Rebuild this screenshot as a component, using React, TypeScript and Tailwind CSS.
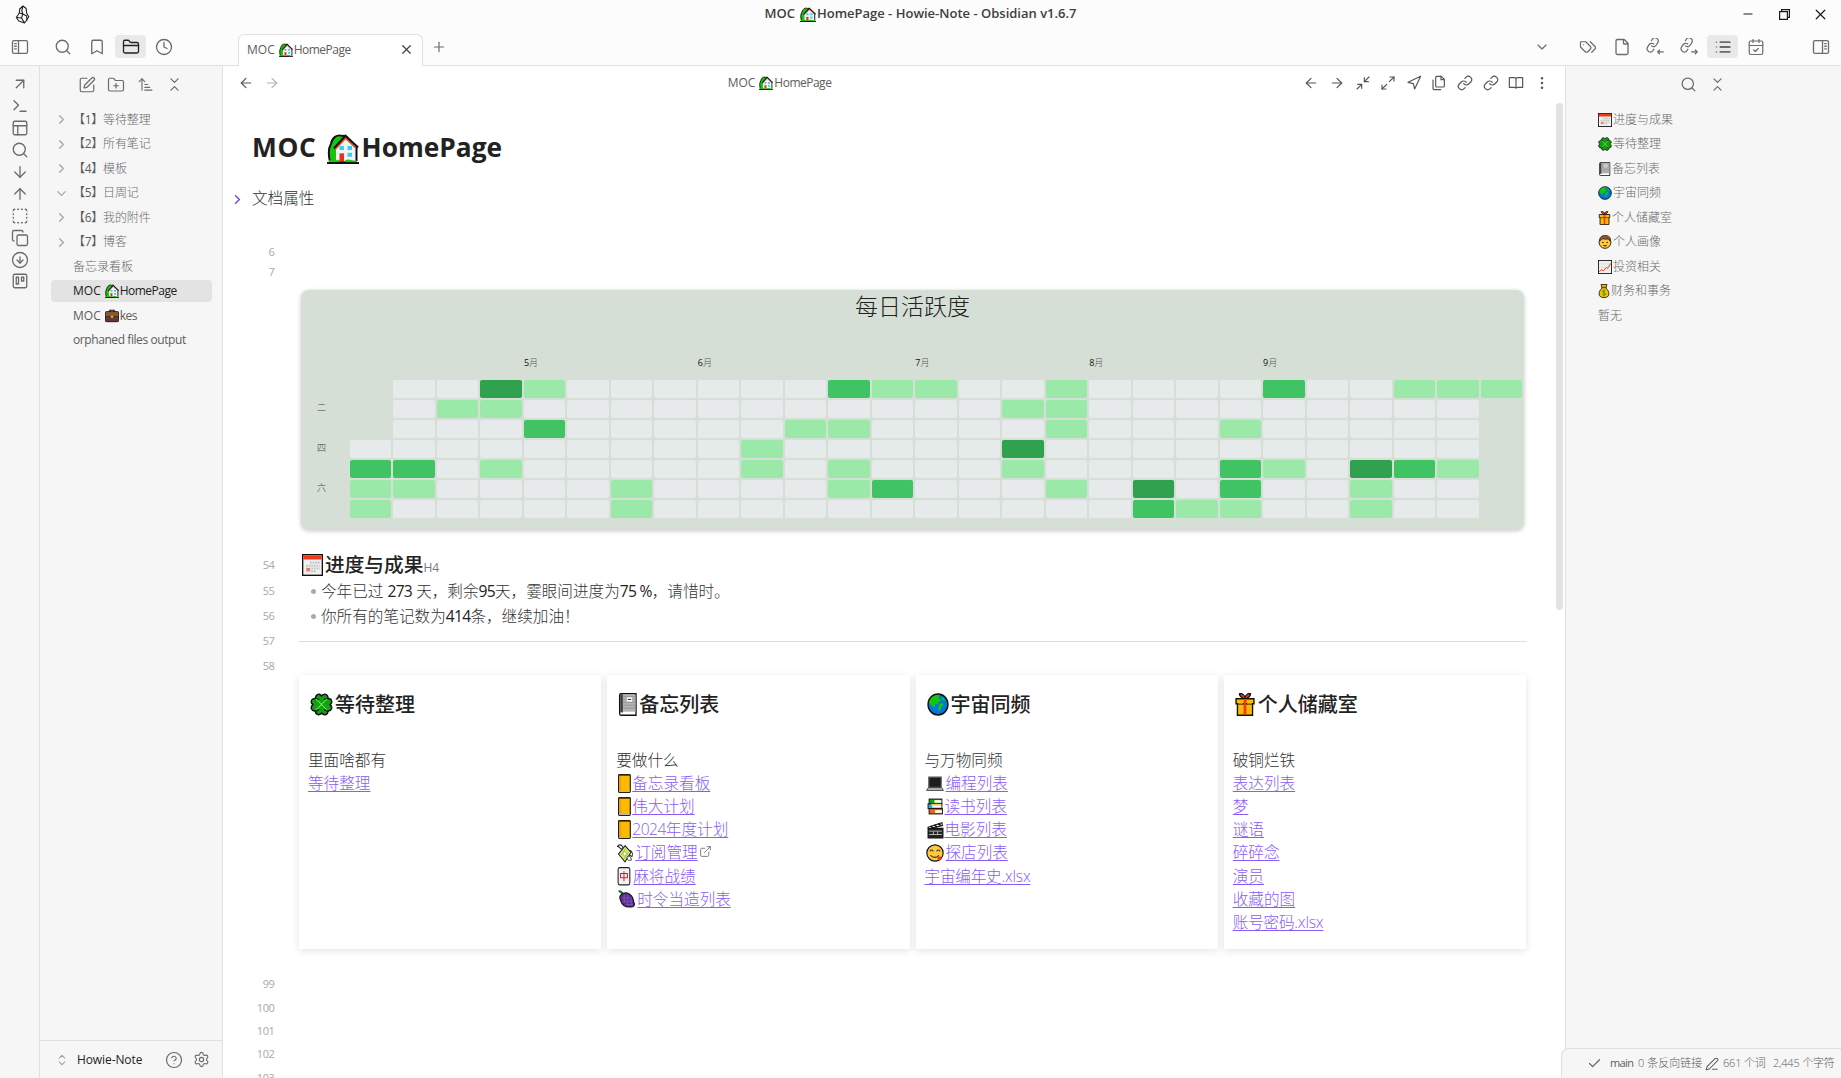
import React from "react";
import {
  ArrowDown, ArrowLeft, ArrowRight, ArrowUp, ArrowUpNarrowWide, ArrowUpRight, Bookmark, CalendarCheck,
  Check, ChevronDown, ChevronRight, ChevronsDownUp, ChevronsUpDown, CircleArrowDown, CircleHelp, Clock, Copy,
  EllipsisVertical, ExternalLink, File, FolderClosed, FolderPlus, Link, Maximize2, Minimize2, Minus, Navigation,
  PanelsTopLeft, PenLine, Plus, Search, Settings, SquareDashed, SquarePen, Terminal, X,
} from "lucide-react";

type IconType = React.ComponentType<{ size?: number; strokeWidth?: number; className?: string }>;

/* ---------- pictographs ---------- */

const art: Record<string, React.ReactNode> = {
  house: (
    <>
      <path d="M3 30c-2-9-2-14 1-19 1-6 6-10 11-8 4-1 6 2 6 5v22z" fill="#16c60c" stroke="#111" strokeWidth="2" />
      <path d="M9 15 19 4l10 11v14H9z" fill="#f3f3f3" />
      <path d="M29.500 13v16" stroke="#111" strokeWidth="2" />
      <path d="M7 16 18.500 3 31 15" fill="none" stroke="#111" strokeWidth="2.400" />
      <path d="M8.500 16.500 18.500 5.500 29 15.500" fill="none" stroke="#f03a17" strokeWidth="1.500" />
      <path d="M12.500 13.500h4.500v4h-4.500zM20.500 13.500h4.500v4h-4.500zM20.500 20.500h4.500v4h-4.500z" fill="#31d2f7" />
      <path d="M12.500 21h4.500v8h-4.500z" fill="#e8301c" />
      <path d="M2 28.500c4-3 6 1 9-1h1v2h6v-1c4-3 8 1 12 0v2H2z" fill="#16c60c" />
      <path d="M0 31h32" stroke="#111" strokeWidth="2" />
    </>
  ),
  briefcase: (
    <>
      <path d="M11 7V3h10v4" fill="none" stroke="#111" strokeWidth="2.500" />
      <rect x="1" y="6" width="30" height="23" rx="2" fill="#603d30" stroke="#111" strokeWidth="2" />
      <path d="M2 7h28v9H2z" fill="#8e562e" />
      <path d="M2 17h28" stroke="#402a20" strokeWidth="1.500" />
      <rect x="13.500" y="15" width="5" height="5" fill="#f7b40a" />
    </>
  ),
  calendar: (
    <>
      <rect x="1" y="1" width="30" height="30" fill="#f2f2f2" stroke="#111" strokeWidth="2" />
      <path d="M2 2h28v6H2z" fill="#f03a17" />
      <path d="M12 12.500h15M6 17h21M6 21h21M6 25h15" stroke="#c6c6c6" strokeWidth="3" strokeDasharray="3 1" />
      <path d="M7 20.500h5v4H7z" fill="#f4694e" />
    </>
  ),
  clover: (
    <>
      <g fill="#13a10e" stroke="#111" strokeWidth="2">
        <path d="M16 16C6 14 6 3 11 2c3-1 4 1 5 2 1-1 3-3 6-2 5 2 4 12-6 14z" />
        <path d="M16 16C6 18 6 29 11 30c3 1 4-1 5-2 1 1 3 3 6 2 5-2 4-12-6-14z" />
        <path d="M16 16C14 6 3 6 2 11c-1 3 1 4 2 5-1 1-3 3-2 6 2 5 12 4 14-6z" />
        <path d="M16 16C18 6 29 6 30 11c1 3-1 4-2 5 1 1 3 3 2 6-2 5-12 4-14-6z" />
      </g>
      <circle cx="16" cy="16" r="8" fill="#13a10e" />
      <path d="m8 8 16 16M24 8 8 24" stroke="#7be876" strokeWidth="1.400" />
    </>
  ),
  notebook: (
    <>
      <path d="M4 3c0-1 1-2 2-2h23v30H6c-1 0-2-1-2-2z" fill="#fff" stroke="#111" strokeWidth="2" />
      <path d="M5 2h4v25H5z" fill="#3b3b3b" />
      <path d="M9 2h19v24H9z" fill="#b4b4b4" />
      <path d="M10 5h18M10 9h18M10 13h18M10 17h18M10 21h18" stroke="#7f7f7f" strokeDasharray="1.500 1.500" strokeWidth="1.500" />
      <rect x="15" y="6" width="8" height="6" fill="#fff" />
      <path d="M16.500 9h5" stroke="#333" strokeWidth="1.500" />
    </>
  ),
  globe: (
    <>
      <circle cx="16" cy="16" r="14.500" fill="#0078d7" stroke="#111" strokeWidth="2" />
      <path d="M3 13C5 5 12 2 18 3l-1 4 4 3-4 2-1 4-4-1-1 5-5-3zM17 17l5-4 2 4-3 2-2 6-3-2z" fill="#16c60c" />
      <path d="m22 5 5 5-2 1-4-3z" fill="#16c60c" />
    </>
  ),
  gift: (
    <>
      <path d="M16 9C12 6 8 6 8 1c4-1 7 2 8 5 1-3 4-6 8-5 0 5-4 5-8 8z" fill="#f03a17" stroke="#111" strokeWidth="1.800" />
      <path d="M5 15h22v16H5z" fill="#ffb900" stroke="#111" strokeWidth="2" />
      <path d="M3 8h26v7H3z" fill="#ffb900" stroke="#111" strokeWidth="2" />
      <path d="M16 9v21" stroke="#f03a17" strokeWidth="4" />
      <path d="M6 15h7m6 0h7" stroke="#c58100" strokeWidth="2" />
    </>
  ),
  man: (
    <>
      <circle cx="16" cy="17" r="13.500" fill="#ffc83d" stroke="#111" strokeWidth="2" />
      <path d="M4 14C3 4 9 1 17 1s13 5 11 13l-5-5c-5 2-11-1-14 0z" fill="#8e562e" stroke="#111" strokeWidth="1.500" />
      <circle cx="11" cy="17" r="1.800" fill="#222" />
      <circle cx="21" cy="17" r="1.800" fill="#222" />
      <path d="M11 23h10c-1 4-9 4-10 0z" fill="#8b2a14" />
    </>
  ),
  chart: (
    <>
      <rect x="1" y="1" width="30" height="30" fill="#f2f2f2" stroke="#111" strokeWidth="2" />
      <path d="M9 2v28M16 2v28M23 2v28M2 9h28M2 16h28M2 23h28" stroke="#d0d0d0" />
      <path d="m3 27 5-5 4 3 7-8 3 2 8-12" fill="none" stroke="#f03a17" strokeWidth="2.200" />
    </>
  ),
  moneybag: (
    <>
      <path d="M8 1h16l-3 8c6 5 8 9 8 14 0 6-6 8-13 8S3 29 3 23c0-5 2-9 8-14z" fill="#ffb900" stroke="#111" strokeWidth="2" />
      <path d="M9 8h14" stroke="#7a4a12" strokeWidth="3" />
      <path d="M20 16c-2-2-8-2-8 1 0 4 8 2 8 6 0 3-6 3-8 1M16 13v15" fill="none" stroke="#13a10e" strokeWidth="2" />
    </>
  ),
  ledger: (
    <>
      <rect x="3" y="1" width="22" height="30" rx="1.500" fill="#ffb900" stroke="#111" strokeWidth="2" />
      <path d="M4 2h20" stroke="#5d4200" strokeWidth="2" />
      <path d="M7 4v24" stroke="#e6a000" strokeWidth="1.500" />
      <path d="M4 29.500h20" stroke="#b8b8b8" strokeWidth="2" />
    </>
  ),
  wings: (
    <>
      <path d="M12 5C8 0 3 1 1 4c4 0 4 4 9 5zM24 11c6-1 8 5 6 10-3-1-5-1-7-5z" fill="#fff" stroke="#222" strokeWidth="1.800" />
      <path d="M16 3 28 14 16 30 3 17z" fill="#d4ea7a" stroke="#222" strokeWidth="2" />
      <path d="m8 19 9-11M14 25l9-11" stroke="#8fae2a" strokeWidth="1.500" />
      <circle cx="15.500" cy="16.500" r="3.500" fill="#fbffe6" stroke="#7f9c1e" />
      <path d="M20 22c3-3 8-1 9 5-3 0-5 2-8-1z" fill="#fff" stroke="#222" strokeWidth="1.500" />
    </>
  ),
  mahjong: (
    <>
      <rect x="4" y="1" width="22" height="29" rx="3" fill="#f2f2f2" stroke="#222" strokeWidth="2" />
      <path d="M8.500 11h13v7h-13zM15 7v17" fill="none" stroke="#e81224" strokeWidth="1.800" />
    </>
  ),
  grapes: (
    <>
      <path d="M3 3c3-2 6 2 8 5" fill="none" stroke="#0b7a0b" strokeWidth="4" />
      <path d="M6 10c5-7 13-6 17-2 5 3 6 8 7 14 3 6-2 9-6 8-9 1-15-4-17-10-2-4-3-7-1-10z" fill="#5c2e91" stroke="#1b0d2c" strokeWidth="2" />
      <path d="M9 14h14M10 20h17M15 26h13M13 8v15M19 8v20M25 13v15" stroke="#8a5cc0" strokeWidth="1.200" />
    </>
  ),
  laptop: (
    <>
      <path d="M5 4h22v19H5z" fill="#1e1e1e" stroke="#555" strokeWidth="2" />
      <path d="M4 24h24l3 5H1z" fill="#c4c4c4" stroke="#333" strokeWidth="1.600" />
    </>
  ),
  books: (
    <>
      <rect x="4" y="2" width="24" height="9" fill="#16a510" stroke="#111" strokeWidth="1.800" />
      <path d="M14 4h13v5H14z" fill="#fff" />
      <rect x="2" y="11" width="26" height="9" fill="#31a8f0" stroke="#111" strokeWidth="1.800" />
      <path d="M8 11h19v3H8z" fill="#f7c95a" />
      <path d="M10 14h17v4H10z" fill="#fff" />
      <rect x="4" y="20" width="25" height="10" fill="#f7630c" stroke="#111" strokeWidth="1.800" />
      <path d="M15 23h13v5H15z" fill="#fff" />
    </>
  ),
  clapper: (
    <>
      <path d="M2 13h28v17H2z" fill="#222" stroke="#111" strokeWidth="2" />
      <path d="m2 11 26-8 1 5-26 6z" fill="#fff" stroke="#111" strokeWidth="2" />
      <path d="m7 9 5 4M14 7l5 4M21 5l5 3" stroke="#111" strokeWidth="3" />
      <path d="M4 18h24M4 24h24M12 19v5M20 19v5" stroke="#c8c8c8" strokeWidth="1.600" />
    </>
  ),
  yum: (
    <>
      <circle cx="16" cy="16" r="14.500" fill="#ffc83d" stroke="#111" strokeWidth="2" />
      <path d="M7 13c1-3 5-3 6 0M19 13c1-3 5-3 6 0M8 20c4 5 11 5 15 0" fill="none" stroke="#2b2b2b" strokeWidth="2" />
      <path d="M20 25c0-4 8-4 8 0 0 5-6 6-8 0z" fill="#f03a17" />
    </>
  ),
};

function Emoji({ name, className }: { name: string; className: string }) {
  return (
    <svg viewBox="0 0 32 32" preserveAspectRatio="none" className={`inline-block shrink-0 ${className}`}>
      {art[name]}
    </svg>
  );
}

/* ---------- custom interface icons ---------- */

function Stroke({ size = 18, sw = 1.75, children }: { size?: number; sw?: number; children: React.ReactNode }) {
  return (
    <svg width={size} height={size} viewBox="0 0 24 24" fill="none" stroke="currentColor" strokeWidth={sw} strokeLinecap="round" strokeLinejoin="round">
      {children}
    </svg>
  );
}

const SidebarLeft = () => (
  <Stroke size={18}>
    <rect x="2" y="3.500" width="20" height="17" rx="2" />
    <path d="M10 3.500v17M5 7.500h2M5 11h2M5 14.500h2" />
  </Stroke>
);
const SidebarRight = () => (
  <Stroke size={18}>
    <rect x="2" y="3.500" width="20" height="17" rx="2" />
    <path d="M14 3.500v17M17 7.500h2M17 11h2M17 14.500h2" />
  </Stroke>
);
const TagPair = () => (
  <Stroke size={18} sw={1.6}>
    <path d="M9 5H2v7l6.290 6.290c.94.94 2.480.94 3.420 0l3.580-3.580c.94-.94.94-2.480 0-3.420L9 5Z" />
    <path d="M6 9.010V9M15 5l6.300 6.300a2.400 2.400 0 0 1 0 3.400L17 19" />
  </Stroke>
);
const Pages = () => (
  <Stroke size={16}>
    <path d="M15.500 2H8.600C7.700 2 7 2.700 7 3.600v12.800c0 .9.700 1.600 1.600 1.600h9.800c.9 0 1.600-.7 1.600-1.600V6.500z" />
    <path d="M3 7.600v12.800c0 .9.700 1.600 1.600 1.600h9.800M15 2v5h5" />
  </Stroke>
);
const Book = () => (
  <Stroke size={16}>
    <path d="M2 4h7.500C11 4 12 5 12 6v14c0-1-1-1.500-2.500-1.500H2zM22 4h-7.500C13 4 12 5 12 6v14c0-1 1-1.500 2.500-1.500H22z" />
  </Stroke>
);
const chain = (
  <g transform="translate(-1.500 -1) rotate(-14 10 10) scale(.86)" strokeWidth="1.900">
    <path d="M10 13a5 5 0 0 0 7.540.54l3-3a5 5 0 0 0-7.070-7.070l-1.720 1.710" />
    <path d="M14 11a5 5 0 0 0-7.540-.54l-3 3a5 5 0 0 0 7.070 7.070l1.710-1.710" />
  </g>
);
const LinksIn = () => (
  <Stroke size={18} sw={1.6}>
    {chain}
    <path d="M23 18.500h-7.500M18 16l-2.500 2.500L18 21" />
  </Stroke>
);
const LinksOut = () => (
  <Stroke size={18} sw={1.6}>
    {chain}
    <path d="M15.500 18.500H23M20.500 16l2.500 2.500-2.500 2.500" />
  </Stroke>
);
const OutlineList = () => (
  <Stroke size={18} sw={2.4}>
    <path d="M8.500 5.500H21M8.500 12H21M8.500 18.500H21" />
    <path d="M3 5.500h.5M3 12h.5M3 18.500h.5" strokeWidth="1.500" />
  </Stroke>
);
const Board = () => (
  <Stroke>
    <rect x="3" y="3" width="18" height="18" rx="2" />
    <path d="M7 7h3v9H7zM14 7h3v5h-3z" />
  </Stroke>
);
const Logo = () => (
  <svg width="15" height="19" viewBox="0 0 15 19" fill="none" stroke="#1f1f1f" strokeWidth="1.100" strokeLinejoin="round">
    <path d="M8 1 4.700 4 4.300 8 1.300 12.500 3.800 16l5.700 1.900 1.500-1.900 2.800-4.200L11.700 8.500 11.200 3.500z" />
    <path d="M8 1 6.800 5.500 7.800 9l3.900 2 .3 4.500M4.300 8l3.500 1-1.300 4-5.200-.5M6.500 13l3 4.900" />
  </svg>
);

/* ---------- building blocks ---------- */

const rowGlyphs = "flex items-center whitespace-nowrap";

function Slot({ children, className }: { children: React.ReactNode; className: string }) {
  return <div className={`flex shrink-0 items-center justify-center ${className}`}>{children}</div>;
}

function HomeLabel() {
  return (
    <>
      <span>MOC</span>
      <Emoji name="house" className="mr-px ml-[4px] h-[14px] w-[14px]" />
      <span className="tracking-[-.5px]">HomePage</span>
    </>
  );
}

function Titlebar() {
  return (
    <div className="flex h-[28px] shrink-0 items-center">
      <div className="flex w-[300px] items-center pl-[15px]">
        <Logo />
      </div>
      <div className={`${rowGlyphs} flex-1 justify-center text-[13px] font-semibold text-[#3f3f3f]`}>
        <span>MOC</span>
        <Emoji name="house" className="mr-px ml-[5px] h-[15px] w-[16px]" />
        <span>HomePage - Howie-Note - Obsidian v1.6.7</span>
      </div>
      <div className="flex w-[300px] items-center justify-end pr-[3px] text-[#1a1a1a]">
        <Slot className="w-[36px]"><Minus size={14} strokeWidth={1.8} /></Slot>
        <Slot className="w-[36px]">
          <svg width="11" height="11" viewBox="0 0 11 11" fill="none" stroke="currentColor" strokeWidth="1.200">
            <path d="M.6 2.600h7.800v7.800H.6zM2.600 2.600v-2h7.800v7.800h-2" />
          </svg>
        </Slot>
        <Slot className="w-[36px]"><X size={17} strokeWidth={1.7} /></Slot>
      </div>
    </div>
  );
}

function TabRow() {
  return (
    <div className="flex h-[38px] shrink-0 border-b border-[#e0e0e0] text-[#6b6b6b]">
      <div className="flex w-[238px] shrink-0 items-center">
        <Slot className="mr-[6px] w-10"><SidebarLeft /></Slot>
        <Slot className="w-[34px]"><Search size={18} strokeWidth={1.75} /></Slot>
        <Slot className="w-[34px]"><Bookmark size={18} strokeWidth={1.75} /></Slot>
        <Slot className="w-[33px]">
          <div className="flex h-[23px] w-[31px] items-center justify-center rounded bg-[#e9e9e9] text-[#222]">
            <FolderClosed size={18} strokeWidth={1.75} />
          </div>
        </Slot>
        <Slot className="w-[34px]"><Clock size={18} strokeWidth={1.75} /></Slot>
      </div>
      <div className="mt-[6px] -mb-px flex w-[185px] shrink-0 items-center rounded-t-md border border-b-0 border-[#e0e0e0] bg-white pb-[2px] pl-[8px]">
        <div className={`${rowGlyphs} w-[152px] text-[12px] text-[#5c5c5c]`}>
          <HomeLabel />
        </div>
        <X size={15} strokeWidth={1.9} className="text-[#444]" />
      </div>
      <Slot className="w-[31px]"><Plus size={16} strokeWidth={1.75} /></Slot>
      <div className="flex flex-1 items-center justify-end">
        <Slot className="mr-[13px] w-8"><ChevronDown size={16} strokeWidth={1.75} /></Slot>
        <Slot className="w-[34px]"><TagPair /></Slot>
        <Slot className="w-[33px]"><File size={18} strokeWidth={1.75} /></Slot>
        <Slot className="w-[34px]"><LinksIn /></Slot>
        <Slot className="w-[34px]"><LinksOut /></Slot>
        <Slot className="w-[33px]">
          <div className="flex h-[23px] w-[31px] items-center justify-center rounded bg-[#e9e9e9]">
            <OutlineList />
          </div>
        </Slot>
        <Slot className="w-[34px]"><CalendarCheck size={18} strokeWidth={1.6} /></Slot>
        <Slot className="ml-[28px] w-10"><SidebarRight /></Slot>
      </div>
    </div>
  );
}

const ribbon: IconType[] = [ArrowUpRight, Terminal, PanelsTopLeft, Search, ArrowDown, ArrowUp, SquareDashed, Copy, CircleArrowDown, Board];

function Ribbon() {
  return (
    <div className="flex w-10 shrink-0 flex-col items-center border-r border-[#e0e0e0] pt-[7.500px] text-[#6b6b6b]">
      {ribbon.map((Icon, i) => (
        <Slot key={i} className="h-[21.900px] w-[39px]"><Icon size={18} strokeWidth={1.75} /></Slot>
      ))}
    </div>
  );
}

const folders = [
  { no: "1", name: "等待整理" },
  { no: "2", name: "所有笔记" },
  { no: "4", name: "模板" },
  { no: "5", name: "日周记", open: true },
  { no: "6", name: "我的附件" },
  { no: "7", name: "博客" },
];

function FileTree() {
  return (
    <div className="flex w-[183px] shrink-0 flex-col border-r border-[#e0e0e0]">
      <div className="flex h-[41.700px] items-center pb-[4px] pl-[32px] text-[#6b6b6b]">
        <Slot className="w-[29.300px]"><SquarePen size={18} strokeWidth={1.6} /></Slot>
        <Slot className="w-[29.300px]"><FolderPlus size={18} strokeWidth={1.6} /></Slot>
        <Slot className="w-[29.300px]"><ArrowUpNarrowWide size={17} strokeWidth={1.6} /></Slot>
        <Slot className="w-[29.300px]"><ChevronsDownUp size={17} strokeWidth={1.75} /></Slot>
      </div>
      <div className="flex-1 text-[12px] text-[#5c5c5c]">
        {folders.map((f) => (
          <div key={f.no} className="flex h-[24.500px] items-center">
            <div className="flex w-[29px] justify-end pl-[14px] text-[#a5a5a5]">
              {f.open ? <ChevronDown size={15} strokeWidth={2} /> : <ChevronRight size={15} strokeWidth={2} />}
            </div>
            <span className="ml-[4px] inline-flex w-[30px] justify-center whitespace-nowrap tracking-[-.3px]">【{f.no}】</span>
            <span className="whitespace-nowrap font-light tracking-[-.1px] text-[#6a6a6a]">{f.name}</span>
          </div>
        ))}
        <div className="flex h-[24.500px] items-center pl-[33px] font-light text-[#6a6a6a]">备忘录看板</div>
        <div className="flex h-[24.500px] items-center pl-[11px]">
          <div className={`${rowGlyphs} h-[22px] w-[161px] rounded bg-[#e3e3e3] pl-[22px] text-[#222]`}>
            <HomeLabel />
          </div>
        </div>
        <div className={`${rowGlyphs} h-[24.500px] pl-[33px]`}>
          <span>MOC</span>
          <Emoji name="briefcase" className="mr-px ml-[4px] h-[14px] w-[14px]" />
          <span className="tracking-[-.5px]">kes</span>
        </div>
        <div className={`${rowGlyphs} h-[24.500px] pl-[33px] tracking-[-.42px]`}>orphaned files output</div>
      </div>
      <div className="flex h-[38px] items-center border-t border-[#e0e0e0] text-[#6b6b6b]">
        <ChevronsUpDown size={14} strokeWidth={1.75} className="ml-[15px] text-[#9a9a9a]" />
        <span className="ml-[8px] w-[82px] text-[12px] font-medium tracking-[-.1px] whitespace-nowrap text-[#222]">Howie-Note</span>
        <Slot className="w-[28px] pl-px"><CircleHelp size={18} strokeWidth={1.6} /></Slot>
        <Slot className="w-[28px]"><Settings size={17} strokeWidth={1.6} /></Slot>
      </div>
    </div>
  );
}

const viewActions: IconType[] = [ArrowLeft, ArrowRight, Minimize2, Maximize2, Navigation, Pages, Link, Link, Book, EllipsisVertical];

function ViewHeader() {
  return (
    <div className="flex h-[35px] shrink-0 items-center pb-px text-[#555]">
      <div className="flex w-[267px] items-center pl-[10px]">
        <Slot className="w-[26px]"><ArrowLeft size={16} strokeWidth={1.75} /></Slot>
        <Slot className="w-[26px] text-[#b4b4b4]"><ArrowRight size={16} strokeWidth={1.75} /></Slot>
      </div>
      <div className={`${rowGlyphs} flex-1 justify-center pr-[229px] pb-px text-[12px] text-[#5c5c5c]`}>
        <HomeLabel />
      </div>
      <div className="flex w-[267px] items-center justify-end pr-[10.500px]">
        {viewActions.map((Icon, i) => (
          <Slot key={i} className="w-[25.600px]"><Icon size={16} strokeWidth={1.75} /></Slot>
        ))}
      </div>
    </div>
  );
}

const COLS = 27;
const heat: Record<number, number>[] = [
  { 3: 3, 4: 1, 11: 2, 12: 1, 13: 1, 16: 1, 21: 2, 24: 1, 25: 1, 26: 1 },
  { 2: 1, 3: 1, 15: 1, 16: 1 },
  { 4: 2, 10: 1, 11: 1, 16: 1, 20: 1 },
  { 9: 1, 15: 3 },
  { 0: 2, 1: 2, 3: 1, 9: 1, 11: 1, 15: 1, 20: 2, 21: 1, 23: 3, 24: 2, 25: 1 },
  { 0: 1, 1: 1, 6: 1, 11: 1, 12: 2, 16: 1, 18: 3, 20: 2, 23: 1 },
  { 0: 1, 6: 1, 18: 2, 19: 1, 20: 1, 23: 1 },
];
const levels = ["bg-[#e6eaea]", "bg-[#9be9a8]", "bg-[#40c463]", "bg-[#30a14e]"];
const weekdays = ["", "二", "", "四", "", "六", ""];
const months: Record<number, string> = { 4: "5", 8: "6", 13: "7", 17: "8", 21: "9" };

function hidden(row: number, col: number) {
  return (row < 3 && col === 0) || (row > 0 && col === COLS - 1);
}

function Heatmap() {
  return (
    <div className="ml-[78px] h-[240px] w-[1223px] rounded-lg bg-[#d5dfd5] pr-[2px] shadow-[0_1px_4px_rgba(0,0,0,0.22)]">
      <div className="flex h-[34px] items-center justify-center pb-px pl-[2px] text-[23px] font-light text-[#222]">每日活跃度</div>
      <div className="mt-[31px] ml-[49px] grid h-[16px] grid-cols-[repeat(27,minmax(0,1fr))] gap-x-[2px] text-[9px] leading-4 whitespace-nowrap">
        {Array.from({ length: COLS }, (_, c) => (
          <div key={c} className="text-[#111]">
            {months[c] && <>{months[c]}<span className="font-light text-[#555]">月</span></>}
          </div>
        ))}
      </div>
      <div className="mt-[9px] flex flex-col gap-[2px]">
        {heat.map((row, r) => (
          <div key={r} className="flex h-[18px] items-center">
            <div className="w-[49px] pb-[2px] pl-[16px] text-[9px] font-light text-[#444]">{weekdays[r]}</div>
            <div className="grid h-[18px] flex-1 grid-cols-[repeat(27,minmax(0,1fr))] gap-x-[2px]">
              {Array.from({ length: COLS }, (_, c) => (
                <div key={c} className={hidden(r, c) ? "" : `rounded-[2px] ${levels[row[c] ?? 0]}`} />
              ))}
            </div>
          </div>
        ))}
      </div>
    </div>
  );
}

function LineNo({ n, className = "" }: { n: number; className?: string }) {
  return <div className={`w-[51.500px] shrink-0 text-right text-[11px] tracking-[-.4px] text-[#a8a8a8] ${className}`}>{n}</div>;
}

function Num({ children }: { children: React.ReactNode }) {
  return <span className="font-normal tracking-[-.7px] text-[#222]">{children}</span>;
}

type Item = { text: string; digits?: string; icon?: string; iconClass?: string; ext?: boolean };
type CardData = { icon: string; iconClass: string; title: string; lead: string; items: Item[] };

const cards: CardData[] = [
  { icon: "clover", iconClass: "ml-[2px] h-[23px] w-[23px] mr-[2px]", title: "等待整理", lead: "里面啥都有", items: [{ text: "等待整理" }] },
  {
    icon: "notebook", iconClass: "ml-px h-[23px] w-[21px] mr-px", title: "备忘列表", lead: "要做什么",
    items: [
      { text: "备忘录看板", icon: "ledger", iconClass: "w-[17px] h-[19px] ml-px -mr-[2px]" },
      { text: "伟大计划", icon: "ledger", iconClass: "w-[17px] h-[19px] ml-px -mr-[2px]" },
      { digits: "2024", text: "年度计划", icon: "ledger", iconClass: "w-[17px] h-[19px] ml-px -mr-[2px]" },
      { text: "订阅管理", icon: "wings", iconClass: "w-[16px] h-[19px] ml-px mr-[2px]", ext: true },
      { text: "麻将战绩", icon: "mahjong", iconClass: "w-[17px] h-[19px] mr-0" },
      { text: "时令当造列表", icon: "grapes", iconClass: "w-[18px] h-[18px] ml-px mr-[2px]" },
    ],
  },
  {
    icon: "globe", iconClass: "h-[23px] w-[22px] ml-[2px] mr-[2px]", title: "宇宙同频", lead: "与万物同频",
    items: [
      { text: "编程列表", icon: "laptop", iconClass: "w-[18px] h-[17px] ml-px mr-[2px]" },
      { text: "读书列表", icon: "books", iconClass: "w-[17px] h-[17px] ml-[2px] mr-px" },
      { text: "电影列表", icon: "clapper", iconClass: "w-[17px] h-[18px] ml-[2px] mr-px" },
      { text: "探店列表", icon: "yum", iconClass: "w-[18px] h-[18px] ml-px mr-[2px]" },
      { text: "宇宙编年史.xlsx" },
    ],
  },
  {
    icon: "gift", iconClass: "ml-px h-[23px] w-[22px] mr-[2px]", title: "个人储藏室", lead: "破铜烂铁",
    items: ["表达列表", "梦", "谜语", "碎碎念", "演员", "收藏的图", "账号密码.xlsx"].map((text) => ({ text })),
  },
];

function Card({ card }: { card: CardData }) {
  return (
    <div className="h-[274px] bg-white pl-[9px] shadow-[0_2px_8px_rgba(0,0,0,0.11)]">
      <div className={`${rowGlyphs} mt-[14px] h-[31px] text-[20px] font-medium text-[#222]`}>
        <Emoji name={card.icon} className={card.iconClass} />
        <span>{card.title}</span>
      </div>
      <div className="mt-[29px] text-[15.600px] font-light">
        <div className="flex h-[23.150px] items-center text-[#333]">{card.lead}</div>
        {card.items.map((it) => (
          <div key={it.text} className={`${rowGlyphs} h-[23.150px] text-[#8a5cf5]`}>
            {it.icon && <Emoji name={it.icon} className={it.iconClass ?? ""} />}
            <span className={`underline decoration-1 underline-offset-2 ${it.text.endsWith(".xlsx") ? "tracking-[-.2px]" : ""}`}>
              {it.digits && <span className="tracking-[-.5px]">{it.digits}</span>}
              {it.text}
            </span>
            {it.ext && <ExternalLink size={13} strokeWidth={1.7} className="-mt-1 ml-[1px] text-[#777]" />}
          </div>
        ))}
      </div>
    </div>
  );
}

function Note() {
  return (
    <div className="flex min-w-0 flex-1 flex-col bg-white">
      <ViewHeader />
      <div className="flex min-h-0 flex-1">
        <div className="min-w-0 flex-1 overflow-hidden">
          <div className={`${rowGlyphs} mt-[27px] h-[40px] pl-[29px] text-[26.300px] font-bold text-[#222]`}>
            <span className="tracking-[.7px]">MOC</span>
            <Emoji name="house" className="mr-[3px] ml-[10px] h-[31px] w-[32px]" />
            <span>HomePage</span>
          </div>
          <div className="mt-[17px] flex h-[28px] items-center text-[15.600px] font-light text-[#333]">
            <ChevronRight size={15} strokeWidth={2.6} className="ml-[7px] text-[#7c4df0]" />
            <span className="ml-[7px]">文档属性</span>
          </div>
          <div className="mt-[29px] h-[48px]">
            <LineNo n={6} className="leading-5" />
            <LineNo n={7} className="leading-5" />
          </div>
          <Heatmap />
          <div className="mt-[21px] flex h-[28px] items-center">
            <LineNo n={54} />
            <div className={`${rowGlyphs} ml-[26.500px] text-[19.700px] font-medium text-[#222]`}>
              <Emoji name="calendar" className="ml-px mr-[2px] h-[22px] w-[21px]" />
              <span>进度与成果</span>
              <span className="mt-[5px] text-[12px] font-normal text-[#777]">H4</span>
            </div>
          </div>
          <div className="flex h-[25px] items-center">
            <LineNo n={55} />
            <div className={`${rowGlyphs} ml-[36.500px] text-[15.600px] font-light text-[#333]`}>
              <span className="mr-[5px] size-[5px] rounded-full bg-[#ababab]" />
              <span>今年已过 <Num>273</Num> 天，剩余<Num>95</Num>天，霎眼间进度为<Num>75 %</Num>，请惜时。</span>
            </div>
          </div>
          <div className="flex h-[25px] items-center">
            <LineNo n={56} />
            <div className={`${rowGlyphs} ml-[36.500px] text-[15.600px] font-light text-[#333]`}>
              <span className="mr-[5px] size-[5px] rounded-full bg-[#ababab]" />
              <span>你所有的笔记数为<Num>414</Num>条，继续加油！</span>
            </div>
          </div>
          <div className="flex h-[24px] items-center">
            <LineNo n={57} />
            <div className="ml-[24.500px] h-px w-[1228px] bg-[#dedede]" />
          </div>
          <div className="flex h-[22px] items-end pb-px"><LineNo n={58} /></div>
          <div className="ml-[76px] grid w-[1227px] grid-cols-4 gap-x-[6px]">
            {cards.map((c) => <Card key={c.title} card={c} />)}
          </div>
          <div className="mt-[24px]">
            {[99, 100, 101, 102, 103].map((n) => (
              <div key={n} className="flex h-[23.300px] items-center"><LineNo n={n} /></div>
            ))}
          </div>
        </div>
        <div className="w-[9px] shrink-0 pt-[2px]"><div className="h-[507px] w-[7px] rounded-full bg-[#e3e3e3]" /></div>
      </div>
    </div>
  );
}

const outline = [
  ["calendar", "进度与成果"], ["clover", "等待整理"], ["notebook", "备忘列表"], ["globe", "宇宙同频"], ["gift", "个人储藏室"],
  ["man", "个人画像"], ["chart", "投资相关"], ["moneybag", "财务和事务"], ["", "暂无"],
];
const outlineIcon: Record<string, string> = {
  notebook: "w-[13px] mr-px", gift: "w-[13px] mr-px", moneybag: "w-[12px] mr-px",
};

function OutlinePane() {
  return (
    <div className="flex w-[276px] shrink-0 flex-col border-l border-[#e0e0e0]">
      <div className="flex h-[41.700px] items-center pb-[4px] pl-[108px] text-[#6b6b6b]">
        <Slot className="w-[29px]"><Search size={17} strokeWidth={1.75} /></Slot>
        <Slot className="w-[29px]"><ChevronsDownUp size={17} strokeWidth={1.75} /></Slot>
      </div>
      <div className="flex-1 pl-[32px] text-[12px] font-light text-[#6a6a6a]">
        {outline.map(([icon, text]) => (
          <div key={text} className={`${rowGlyphs} h-[24.500px]`}>
            {icon && <Emoji name={icon} className={`h-[14px] ${outlineIcon[icon] ?? "w-[14px] mr-px"}`} />}
            <span>{text}</span>
          </div>
        ))}
      </div>
      <div className="-ml-[5px] flex h-[30px] shrink-0 items-center rounded-tl-lg border-t border-l border-[#dedede] bg-[#f6f6f6] text-[11px] whitespace-nowrap text-[#5c5c5c]">
        <Check size={15} strokeWidth={1.75} className="mr-[8px] ml-[25px]" />
        <span className="w-[28px] tracking-[-.6px]">main</span>
        <span className="w-[67px] font-light">0 条反向链接</span>
        <PenLine size={14} strokeWidth={1.75} />
        <span className="ml-[4px] w-[50px] font-light tracking-[-.2px]">661 个词</span>
        <span className="font-light tracking-[-.2px]">2,445 个字符</span>
      </div>
    </div>
  );
}

export default function App() {
  return (
    <div className="flex h-[1078px] w-[1841px] flex-col overflow-hidden bg-[#fcfcfc] font-['Open_Sans','Noto_Sans_CJK_SC',sans-serif]">
      <Titlebar />
      <TabRow />
      <div className="flex min-h-0 flex-1 bg-[#f6f6f6]">
        <Ribbon />
        <FileTree />
        <Note />
        <OutlinePane />
      </div>
    </div>
  );
}
